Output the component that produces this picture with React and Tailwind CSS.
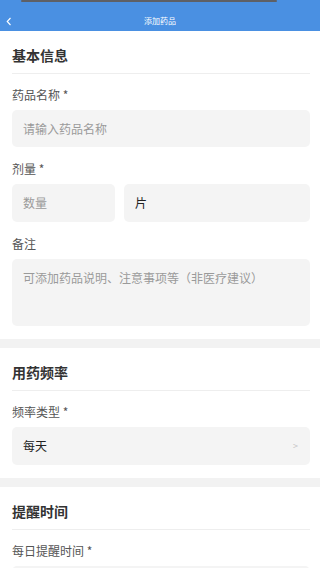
import React from 'react';

const font = { fontFamily: '"Noto Sans CJK SC", "Noto Sans", sans-serif' };

const Label = ({ children, first }) => (
  <div className={`${first ? 'mt-[12px]' : 'mt-[13px]'} mb-[6px] text-[12px] leading-[18px] text-[#555]`}>{children}</div>
);

const Section = ({ title, children, last }) => (
  <div className={`bg-white pl-3 pr-[10px] ${last ? '' : 'pb-[13px]'}`}>
    <div className="pt-[14px] pb-[8px] text-[14px] leading-[20px] font-bold text-[#333]">{title}</div>
    <div className="h-px bg-[#eeeeee]" />
    {children}
  </div>
);

export default function App() {
  return (
    <div className="w-[320px] h-[568px] overflow-hidden bg-[#f2f2f2]" style={font}>
      {/* header */}
      <div className="relative h-[31px] bg-[#4a90e2]">
        <div className="absolute left-[21px] top-0 h-[2px] w-[256px] rounded-full bg-[#5e6066]" />
        <div className="flex h-full items-center pt-[11px]">
          <div className="w-[40px] pl-[6px]">
            <svg width="6" height="9" viewBox="0 0 6 9" fill="none">
              <path d="M4.5 1 L1.2 4.5 L4.5 8" stroke="white" strokeWidth="1.1" />
            </svg>
          </div>
          <div className="flex-1 text-center text-[8px] leading-[10px] text-white">添加药品</div>
          <div className="w-[40px]" />
        </div>
      </div>

      <Section title="基本信息">
        <Label first>药品名称 *</Label>
        <div className="flex h-[37px] items-center rounded-[5px] bg-[#f4f4f4] px-[11px] text-[12px] text-[#9a9a9a]">
          请输入药品名称
        </div>
        <Label>剂量 *</Label>
        <div className="flex gap-[9px]">
          <div className="flex h-[38px] w-[103px] items-center rounded-[5px] bg-[#f4f4f4] px-[11px] text-[12px] text-[#9a9a9a]">
            数量
          </div>
          <div className="flex h-[38px] flex-1 items-center rounded-[5px] bg-[#f4f4f4] px-[11px] text-[12px] text-[#222]">
            片
          </div>
        </div>
        <Label>备注</Label>
        <div className="h-[67px] rounded-[5px] bg-[#f4f4f4] px-[11px] pt-[10px] text-[12px] leading-[18px] text-[#9a9a9a]">
          可添加药品说明、注意事项等（非医疗建议）
        </div>
      </Section>

      <div className="h-[9px]" />

      <Section title="用药频率">
        <Label first>频率类型 *</Label>
        <div className="flex h-[38px] items-center justify-between rounded-[5px] bg-[#f4f4f4] pl-[11px] pr-[12px] text-[12px] text-[#222]">
          <span>每天</span>
          <span className="text-[9px] text-[#c4c4c4]">&gt;</span>
        </div>
      </Section>

      <div className="h-[9px]" />

      <Section title="提醒时间" last>
        <Label first>每日提醒时间 *</Label>
        <div className="h-[38px] rounded-[5px] bg-[#f4f4f4]" />
      </Section>
    </div>
  );
}
